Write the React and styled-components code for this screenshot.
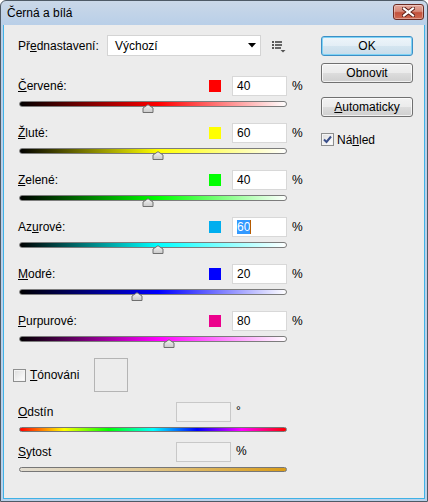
import React from "react"
import styled, { createGlobalStyle } from "styled-components"

const channels = [
  { label: ["", "Č", "ervené:"], value: 40, swatch: "#ff0000", track: "#ff0000" },
  { label: ["", "Ž", "luté:"], value: 60, swatch: "#ffff00", track: "#ffff00" },
  { label: ["", "Z", "elené:"], value: 40, swatch: "#00ff00", track: "#00ff00" },
  { label: ["Az", "u", "rové:"], value: 60, swatch: "#00aeef", track: "#00ffff", selected: true },
  { label: ["", "M", "odré:"], value: 20, swatch: "#0000ff", track: "#0000ff" },
  { label: ["", "P", "urpurové:"], value: 80, swatch: "#ec008c", track: "#ff00ff" },
]

const TRACK_W = 268

// slider range of the dialog is -200 .. 300
const thumbLeft = value => 1 + ((value + 200) / 500) * TRACK_W - 6

export default function App() {
  return (
    <>
      <GlobalStyle />
      <Window>
        <TitleBar>
          <Title>Černá a bílá</Title>
          <CloseButton>
            <svg width="13" height="10" viewBox="0 0 13 10">
              <path d="M2 1.5 L11 8.5 M11 1.5 L2 8.5" stroke="#5a1d16" strokeWidth="4" strokeLinecap="square" />
              <path d="M2 1.5 L11 8.5 M11 1.5 L2 8.5" stroke="#ffffff" strokeWidth="2.2" strokeLinecap="square" />
            </svg>
          </CloseButton>
        </TitleBar>
        <Client>
          <LeftCol>
            <PresetRow>
              <PresetLabel>
                Př<Key>e</Key>dnastavení:
              </PresetLabel>
              <Select>
                <span>Výchozí</span>
                <svg width="8" height="5" viewBox="0 0 8 5">
                  <path d="M0 0 H8 L4 4.5 Z" fill="#000" />
                </svg>
              </Select>
              <MenuIcon width="14" height="12" viewBox="0 0 14 12">
                <rect x="0" y="0" width="2" height="2" fill="#555" />
                <rect x="3" y="0" width="7" height="2" fill="#666" />
                <rect x="0" y="3" width="2" height="2" fill="#555" />
                <rect x="3" y="3" width="7" height="2" fill="#666" />
                <rect x="0" y="6" width="2" height="2" fill="#555" />
                <rect x="3" y="6" width="6" height="2" fill="#666" />
                <path d="M8.5 9 H13.5 L11 11.5 Z" fill="#555" />
              </MenuIcon>
            </PresetRow>

            <Channels>
              {channels.map(ch => (
                <ChannelBlock key={ch.label.join("")}>
                  <Header>
                    <Label>
                      {ch.label[0]}
                      <Key>{ch.label[1]}</Key>
                      {ch.label[2]}
                    </Label>
                    <Swatch $color={ch.swatch} />
                    <Field>
                      {ch.selected ? (
                        <>
                          <Selected>{ch.value}</Selected>
                          <Caret />
                        </>
                      ) : (
                        ch.value
                      )}
                    </Field>
                    <Unit>%</Unit>
                  </Header>
                  <TrackArea>
                    <Track $fill={`linear-gradient(to right, #000 0%, ${ch.track} 52%, #fff 100%)`} />
                    <Thumb style={{ left: thumbLeft(ch.value) }} width="12" height="9" viewBox="0 0 12 9">
                      <defs>
                        <linearGradient id="thumbGrad" x1="0" y1="0" x2="0" y2="1">
                          <stop offset="0" stopColor="#f4f4f4" />
                          <stop offset="1" stopColor="#c9c9c9" />
                        </linearGradient>
                      </defs>
                      <path d="M1 8.5 V4 L6 0.7 L11 4 V8.5 Z" fill="url(#thumbGrad)" stroke="#6f6f6f" strokeLinejoin="round" />
                    </Thumb>
                  </TrackArea>
                </ChannelBlock>
              ))}
            </Channels>

            <ToningRow>
              <CheckBox $offset={-5} />
              <ToningLabel>
                <Key>T</Key>ónováni
              </ToningLabel>
              <ToneSwatch />
            </ToningRow>

            <HsBlock>
              <Header>
                <HsLabel>
                  <Key>O</Key>dstín
                </HsLabel>
                <Field $disabled />
                <HsUnit>°</HsUnit>
              </Header>
              <HsTrack $fill="linear-gradient(to right, #ff0000 0%, #ffff00 16.6%, #00ff00 33.3%, #00ffff 50%, #0000ff 66.6%, #ff00ff 83.3%, #ff0000 100%)" />
            </HsBlock>

            <HsBlock>
              <Header>
                <HsLabel>
                  <Key>S</Key>ytost
                </HsLabel>
                <Field $disabled />
                <HsUnit>%</HsUnit>
              </Header>
              <HsTrack $fill="linear-gradient(to right, #e2ddd2 0%, #e0c893 45%, #d99c18 100%)" />
            </HsBlock>
          </LeftCol>

          <RightCol>
            <DefaultButton>OK</DefaultButton>
            <Button $gap={7}>Obnovit</Button>
            <Button $gap={14}>
              <Key>A</Key>utomaticky
            </Button>
            <PreviewRow>
              <CheckBox $checked>
                <svg width="9" height="9" viewBox="0 0 9 9">
                  <path d="M1 4.5 L3.5 7 L8 1.5" stroke="#3a4f8a" strokeWidth="2" fill="none" />
                </svg>
              </CheckBox>
              <span>
                Ná<Key>h</Key>led
              </span>
            </PreviewRow>
          </RightCol>
        </Client>
      </Window>
    </>
  )
}

const GlobalStyle = createGlobalStyle`
  html, body {
    margin: 0;
    padding: 0;
    background: #ffffff;
  }
  body {
    font-family: "Liberation Sans", Arial, sans-serif;
    font-size: 12px;
    color: #000;
  }
`

const Window = styled.div`
  width: 428px;
  height: 502px;
  box-sizing: border-box;
  display: flex;
  flex-direction: column;
  border: 1px solid #4e5a66;
  border-radius: 6px 6px 0 0;
  background: linear-gradient(#cad8e8 0px, #b9cfe8 24px, #b9d1ea 100%);
  overflow: hidden;
`

const TitleBar = styled.div`
  height: 24px;
  flex: none;
  display: flex;
  align-items: center;
  justify-content: space-between;
  padding: 0 3px 0 6px;
`

const Title = styled.div`
  font-size: 12px;
  color: #000;
  padding-bottom: 1px;
`

const CloseButton = styled.div`
  width: 31px;
  height: 16px;
  box-sizing: border-box;
  margin-top: -3px;
  display: flex;
  align-items: center;
  justify-content: center;
  border: 1px solid #6b2a22;
  border-radius: 3px;
  background: linear-gradient(#e4a89c 0%, #d78a7a 45%, #c3513c 55%, #cf6a52 100%);
  box-shadow: inset 0 0 0 1px rgba(255, 255, 255, 0.35);
`

const Client = styled.div`
  flex: 1;
  display: flex;
  margin: 0 2px 2px 2px;
  border: 1px solid #3fb2e6;
  border-top: none;
  background: #ececec;
  padding: 10px 0 0 14px;
`

const LeftCol = styled.div`
  width: 287px;
  display: flex;
  flex-direction: column;
`

const RightCol = styled.div`
  width: 92px;
  margin-left: 16px;
  display: flex;
  flex-direction: column;
`

const Key = styled.span`
  text-decoration: underline;
`

const PresetRow = styled.div`
  height: 21px;
  display: flex;
  align-items: center;
`

const PresetLabel = styled.div`
  width: 89px;
`

const Select = styled.div`
  width: 154px;
  height: 21px;
  box-sizing: border-box;
  border: 1px solid #d4d4d4;
  background: #fff;
  display: flex;
  align-items: center;
  justify-content: space-between;
  padding: 0 4px 0 7px;
`

const MenuIcon = styled.svg`
  margin-left: 11px;
  margin-top: 3px;
`

const Channels = styled.div`
  margin-top: 20px;
  display: flex;
  flex-direction: column;
`

const ChannelBlock = styled.div`
  height: 47px;
  display: flex;
  flex-direction: column;
`

const Header = styled.div`
  height: 20px;
  display: flex;
  align-items: center;
`

const Label = styled.div`
  flex: 1;
`

const Swatch = styled.div`
  width: 12px;
  height: 12px;
  margin-right: 11px;
  background: ${p => p.$color};
`

const Field = styled.div`
  width: 55px;
  height: 20px;
  box-sizing: border-box;
  border: 1px solid ${p => (p.$disabled ? "#c8c8c8" : "#d8d8d8")};
  background: ${p => (p.$disabled ? "#f0f0f0" : "#ffffff")};
  display: flex;
  align-items: center;
  padding-left: 4px;
`

const Selected = styled.span`
  background: #3399ff;
  color: #fff;
  line-height: 14px;
`

const Caret = styled.span`
  width: 1px;
  height: 14px;
  background: #b55a00;
`

const Unit = styled.div`
  width: 13px;
  margin-left: 5px;
`

const TrackArea = styled.div`
  position: relative;
  height: 22px;
  margin-top: 5px;
`

const Track = styled.div`
  margin-left: 1px;
  width: ${TRACK_W}px;
  height: 6px;
  box-sizing: border-box;
  border: 1px solid #7c7c7c;
  border-radius: 3px;
  background: ${p => p.$fill};
`

const Thumb = styled.svg`
  position: absolute;
  top: 3px;
`

const ToningRow = styled.div`
  height: 34px;
  display: flex;
  align-items: center;
`

const CheckBox = styled.div`
  width: 13px;
  height: 13px;
  box-sizing: border-box;
  margin-left: ${p => p.$offset || 0}px;
  border: 1px solid #8e8f8f;
  background: linear-gradient(135deg, #dcdcdc 0%, #f6f6f6 70%, #ffffff 100%);
  box-shadow: inset 0 0 0 1px #f4f4f4;
  display: flex;
  align-items: center;
  justify-content: center;
`

const ToningLabel = styled.div`
  width: 64px;
  margin-left: 4px;
`

const ToneSwatch = styled.div`
  width: 34px;
  height: 34px;
  box-sizing: border-box;
  border: 1px solid #b4b4b4;
`

const HsBlock = styled.div`
  margin-top: 10px;
  display: flex;
  flex-direction: column;
`

const HsLabel = styled.div`
  width: 158px;
`

const HsUnit = styled.div`
  margin-left: 5px;
  align-self: flex-start;
  padding-top: 2px;
`

const HsTrack = styled(Track)`
  height: 5px;
  margin-top: 5px;
  border-color: #777;
`

const Button = styled.div`
  height: 20px;
  box-sizing: border-box;
  margin-top: ${p => p.$gap || 0}px;
  display: flex;
  align-items: center;
  justify-content: center;
  border: 1px solid #707070;
  border-radius: 3px;
  background: linear-gradient(#f2f2f2 0%, #ebebeb 50%, #dddddd 51%, #cfcfcf 100%);
  box-shadow: inset 0 0 0 1px rgba(255, 255, 255, 0.7);
`

const DefaultButton = styled(Button)`
  margin-top: 1px;
  border-color: #3c8fc6;
  background: linear-gradient(#eef5fa 0%, #e3eef6 50%, #d4e5f0 51%, #c8dcea 100%);
  box-shadow: inset 0 0 0 1px #7fd3f5;
`

const PreviewRow = styled.div`
  margin-top: 16px;
  display: flex;
  align-items: center;
  gap: 3px;
  height: 13px;
`
